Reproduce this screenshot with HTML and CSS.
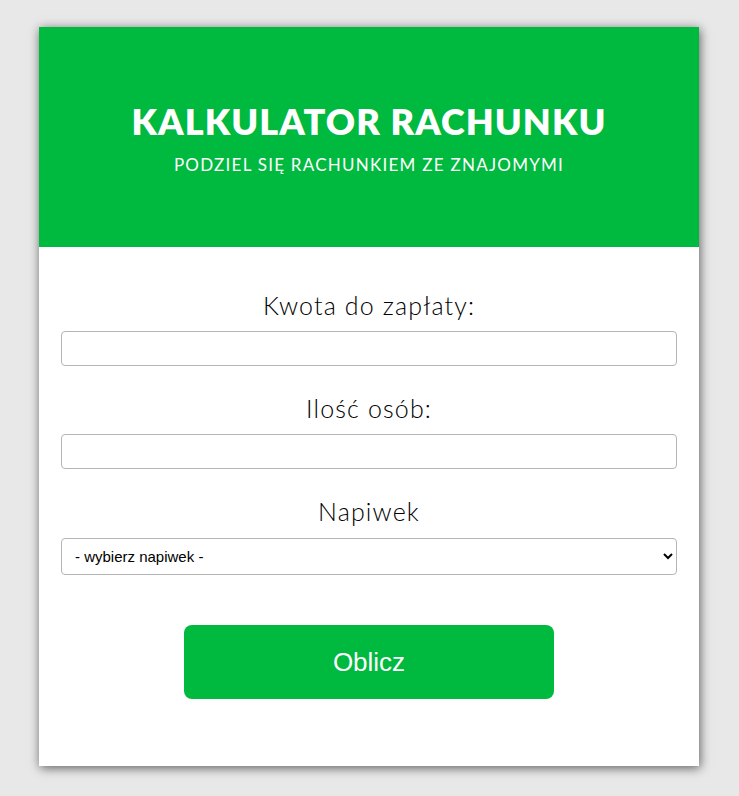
FILE: index.html
```html
<!DOCTYPE html>
<html lang="pl">
<head>
<meta charset="utf-8">
<title>Kalkulator rachunku</title>
<link rel="stylesheet" href="styles.css">
</head>
<body>
<div class="card">
  <header class="header">
    <h1 class="title">KALKULATOR RACHUNKU</h1>
    <p class="subtitle">PODZIEL SIĘ RACHUNKIEM ZE ZNAJOMYMI</p>
  </header>
  <form class="form">
    <label class="label" for="kwota">Kwota do zapłaty:</label>
    <input class="field" id="kwota" type="text">
    <label class="label" for="osoby">Ilość osób:</label>
    <input class="field" id="osoby" type="text">
    <label class="label" for="napiwek">Napiwek</label>
    <select class="field select" id="napiwek">
      <option>- wybierz napiwek -</option>
    </select>
    <button class="btn" type="button">Oblicz</button>
  </form>
</div>
</body>
</html>
```
FILE: styles.css
```css
html, body {
  margin: 0;
  padding: 0;
  background: #e8e8e8;
}
body {
  padding: 27px 0 30px 39px;
  font-family: "Lato", "Open Sans", sans-serif;
}
.card {
  width: 660px;
  height: 739px;
  background: #fff;
  box-shadow: 1px 2px 10px rgba(0,0,0,0.6);
  display: flex;
  flex-direction: column;
}
.header {
  background: #00b93f;
  height: 220px;
  box-sizing: border-box;
  padding-top: 74px;
  text-align: center;
  color: #fff;
}
.title {
  margin: 0;
  font-size: 36px;
  font-weight: 800;
  letter-spacing: 1.1px;
  line-height: 40px;
}
.subtitle {
  margin: 14px 0 0;
  font-size: 17px;
  font-weight: 400;
  letter-spacing: 1.25px;
  line-height: 20px;
}
.form {
  display: flex;
  flex-direction: column;
  padding: 43px 22px 0;
}
.label {
  text-align: center;
  font-size: 25px;
  font-weight: 300;
  color: #000;
  letter-spacing: 1.15px;
  line-height: 30px;
  margin-bottom: 11px;
}
.field {
  height: 35px;
  box-sizing: border-box;
  border: 1px solid #b5b5b5;
  border-radius: 4px;
  background: #fff;
  margin-bottom: 27px;
  font-family: "Liberation Sans", Arial, sans-serif;
  font-size: 15px;
  padding: 0 9px;
}
.select {
  height: 37px;
  margin-top: 1px;
  color: #000;
  margin-bottom: 50px;
}
.btn {
  align-self: center;
  width: 370px;
  height: 74px;
  border: none;
  border-radius: 8px;
  background: #00b93f;
  color: #fff;
  font-family: "Liberation Sans", Arial, sans-serif;
  font-size: 26px;
}
```
